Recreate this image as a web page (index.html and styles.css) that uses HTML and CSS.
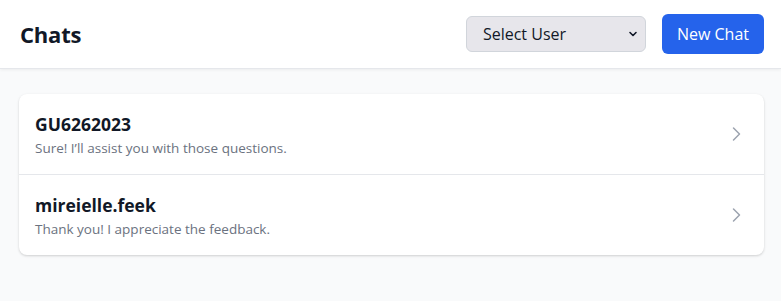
FILE: index.html
```html
<html>
	<head>
		<title>Chats</title>
		<link rel="stylesheet" href="styles.css">
	</head>
	<body>
		<header class="topbar">
			<h1 class="title">Chats</h1>
			<div class="actions">
				<div class="select-wrap">
					<select class="user-select">
						<option>Select User</option>
					</select>
					<svg class="select-caret" width="12" height="12" viewBox="0 0 12 12"><path d="M3 4.5l3 3 3-3" fill="none" stroke="#111827" stroke-width="1.6" stroke-linecap="round" stroke-linejoin="round"/></svg>
				</div>
				<button class="btn-new">New Chat</button>
			</div>
		</header>
		<main class="content">
			<ul class="chat-list">
				<li class="chat-item">
					<div class="chat-text">
						<div class="chat-name">GU6262023</div>
						<div class="chat-msg">Sure! I’ll assist you with those questions.</div>
					</div>
					<svg class="chev" width="24" height="24" viewBox="0 0 24 24"><path d="M9.5 6l6 6-6 6" fill="none" stroke="#9ca3af" stroke-width="1.5" stroke-linecap="round" stroke-linejoin="round"/></svg>
				</li>
				<li class="chat-item">
					<div class="chat-text">
						<div class="chat-name">mireielle.feek</div>
						<div class="chat-msg">Thank you! I appreciate the feedback.</div>
					</div>
					<svg class="chev" width="24" height="24" viewBox="0 0 24 24"><path d="M9.5 6l6 6-6 6" fill="none" stroke="#9ca3af" stroke-width="1.5" stroke-linecap="round" stroke-linejoin="round"/></svg>
				</li>
			</ul>
		</main>
	</body>
</html>
```

FILE: styles.css
```css
body {
	margin: 0;
	background: #f9fafb;
	font-family: "Open Sans", "Noto Sans", sans-serif;
	color: #111827;
}
.topbar {
	display: flex;
	align-items: center;
	justify-content: space-between;
	height: 68px;
	padding: 0 17px 0 20px;
	background: #fff;
	border-bottom: 1px solid #e5e7eb;
	box-shadow: 0 1px 3px rgba(0,0,0,0.06);
}
.title {
	margin: 0;
	font-size: 22px;
	line-height: 32px;
	font-weight: 700;
	letter-spacing: -0.2px;
}
.actions {
	display: flex;
	align-items: center;
	gap: 16px;
}
.select-wrap {
	position: relative;
}
.user-select {
	appearance: none;
	-webkit-appearance: none;
	width: 180px;
	height: 36px;
	padding: 0 30px 0 16px;
	background: #e7e6eb;
	border: 1px solid #d1d5db;
	border-radius: 6px;
	font-family: inherit;
	font-size: 16px;
	color: #111827;
}
.select-caret {
	position: absolute;
	right: 7px;
	top: 12px;
	pointer-events: none;
}
.btn-new {
	height: 40px;
	padding: 0 15px;
	background: #2563eb;
	color: #fff;
	border: 0;
	border-radius: 6px;
	font-family: inherit;
	font-size: 16px;
}
.content {
	padding: 25px 17px 0 19px;
}
.chat-list {
	margin: 0;
	padding: 0;
	list-style: none;
	background: #fff;
	border-radius: 8px;
	box-shadow: 0 1px 3px rgba(0,0,0,0.12), 0 1px 2px rgba(0,0,0,0.06);
}
.chat-item {
	display: flex;
	align-items: center;
	justify-content: space-between;
	padding: 16px 16px 16px 16px;
	border-top: 1px solid #e5e7eb;
}
.chat-item:first-child {
	border-top: 0;
}
.chat-name {
	font-size: 17.5px;
	line-height: 28px;
	font-weight: 700;
}
.chat-msg {
	font-size: 13.5px;
	line-height: 20px;
	color: #6b7280;
}
.chev {
	display: block;
}
```
